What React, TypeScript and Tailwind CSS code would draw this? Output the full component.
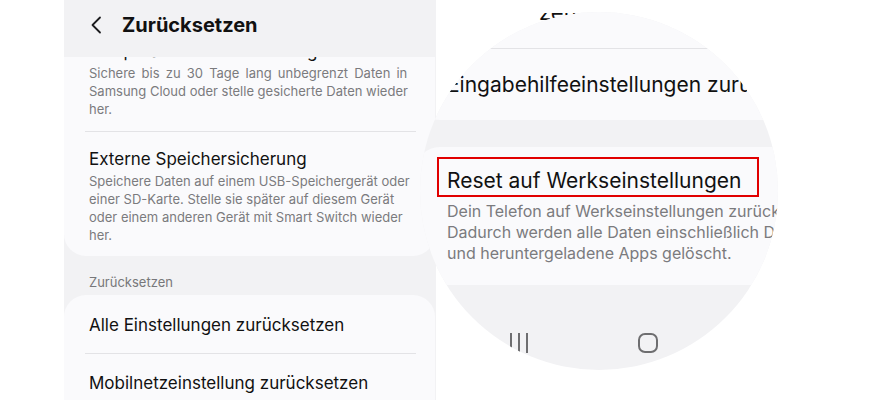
function BackChevron() {
  return (
    <svg width="12" height="18" viewBox="0 0 12 18" fill="none" className="shrink-0">
      <path d="M10 1.5L2.5 9L10 16.5" stroke="#1c1c1e" strokeWidth="1.8" strokeLinecap="round" strokeLinejoin="round" />
    </svg>
  )
}

function Divider({ className = "" }: { className?: string }) {
  return <div className={`h-px bg-[#e3e3e6] ${className}`} />
}

function Magnifier() {
  return (
    <div className="absolute left-[420px] top-[12px] h-[358px] w-[358px] overflow-hidden rounded-full bg-[#f2f2f4]">
      {/* upper card */}
      <div className="-ml-[6px] h-[108px] w-[520px] rounded-bl-[26px] bg-[#fafafc] pt-[36px]">
        <Divider className="ml-[27px]" />
        <div className="ml-[35px] mt-[22px] w-[298px] overflow-hidden">
          <div className="-ml-[2px] whitespace-nowrap text-[21px] leading-[28px] text-[#111]">
            Eingabehilfeeinstellungen zurücksetzen
          </div>
        </div>
      </div>

      {/* reset card */}
      <div className="-ml-[6px] mt-[27px] h-[138px] w-[520px] rounded-tl-[26px] bg-[#fafafc] pt-[10px]">
        <div className="ml-[23px] h-[40px] w-[322px] border-2 border-[#e10000] pl-[8px] pt-[8px]">
          <div className="whitespace-nowrap text-[21px] leading-[28px] text-[#111]">Reset auf Werkseinstellungen</div>
        </div>
        <p className="ml-[33px] mt-[4px] whitespace-nowrap text-[16px] leading-[21px] text-[#7b7b7e]">
          Dein Telefon auf Werkseinstellungen zurücksetzen.
          <br />
          Dadurch werden alle Daten einschließlich Downloads
          <br />
          und heruntergeladene Apps gelöscht.
        </p>
      </div>

      {/* navigation bar */}
      <div className="mt-[48px] flex items-center">
        <div className="ml-[90px] flex h-[20px] gap-[6px]">
          <span className="w-[2px] bg-[#6e6e70]" />
          <span className="w-[2px] bg-[#6e6e70]" />
          <span className="w-[2px] bg-[#6e6e70]" />
        </div>
        <div className="ml-[110px] h-[20px] w-[20px] rounded-[7px] border-2 border-[#6e6e70]" />
      </div>
    </div>
  )
}

export default function App() {
  return (
    <div className="relative h-[400px] w-[879px] overflow-hidden bg-white font-['Inter',sans-serif]">
      <div className="ml-[64px] flex h-full w-[372px] flex-col bg-[#f2f2f4]">
        <header className="flex h-[57px] shrink-0 items-start pl-[26px] pt-[13px]">
          <div className="pt-[3px]">
            <BackChevron />
          </div>
          <h1 className="ml-[20px] text-[20px] font-bold leading-[24px] text-[#111]">Zurücksetzen</h1>
        </header>

        <section className="h-[199px] w-[371px] shrink-0 overflow-hidden rounded-b-[22px] bg-[#fafafc]">
          <div className="-mt-[16px] h-[20px] pl-[25px] text-[17px] leading-[20px] text-[#111]">
            Temporäre Cloud-Sicherung
          </div>
          <p className="mt-[3px] whitespace-nowrap pl-[25px] text-[13px] leading-[18px] text-[#7b7b7e]">
            <span className="[word-spacing:2.5px]">Sichere bis zu 30 Tage lang unbegrenzt Daten in</span>
            <br />
            Samsung Cloud oder stelle gesicherte Daten wieder
            <br />
            her.
          </p>
          <Divider className="ml-[21px] mr-[19px] mt-[13px]" />
          <div className="mt-[16px] pl-[25px] text-[17px] leading-[22px] text-[#111]">Externe Speichersicherung</div>
          <p className="mt-[2px] whitespace-nowrap pl-[25px] text-[13px] leading-[18px] text-[#7b7b7e]">
            Speichere Daten auf einem USB-Speichergerät oder
            <br />
            einer SD-Karte. Stelle sie später auf diesem Gerät
            <br />
            oder einem anderen Gerät mit Smart Switch wieder
            <br />
            her.
          </p>
        </section>

        <div className="shrink-0 pb-[5px] pl-[25px] pt-[18px] text-[13px] leading-[16px] text-[#77777a]">Zurücksetzen</div>

        <section className="w-[371px] flex-1 rounded-t-[22px] bg-[#fafafc] pt-[19px]">
          <div className="pl-[25px] text-[17px] leading-[22px] text-[#111]">Alle Einstellungen zurücksetzen</div>
          <Divider className="ml-[21px] mr-[19px] mt-[17px]" />
          <div className="mt-[18px] pl-[25px] text-[17px] leading-[22px] text-[#111]">Mobilnetzeinstellung zurücksetzen</div>
        </section>
      </div>

      {/* bottom of the cut-off line above the magnifier */}
      <div className="absolute left-[539px] top-[13px] h-[8px] overflow-hidden">
        <div className="-mt-[12px] text-[22px] leading-[22px] text-[#111]">zen</div>
      </div>

      <Magnifier />
    </div>
  )
}
